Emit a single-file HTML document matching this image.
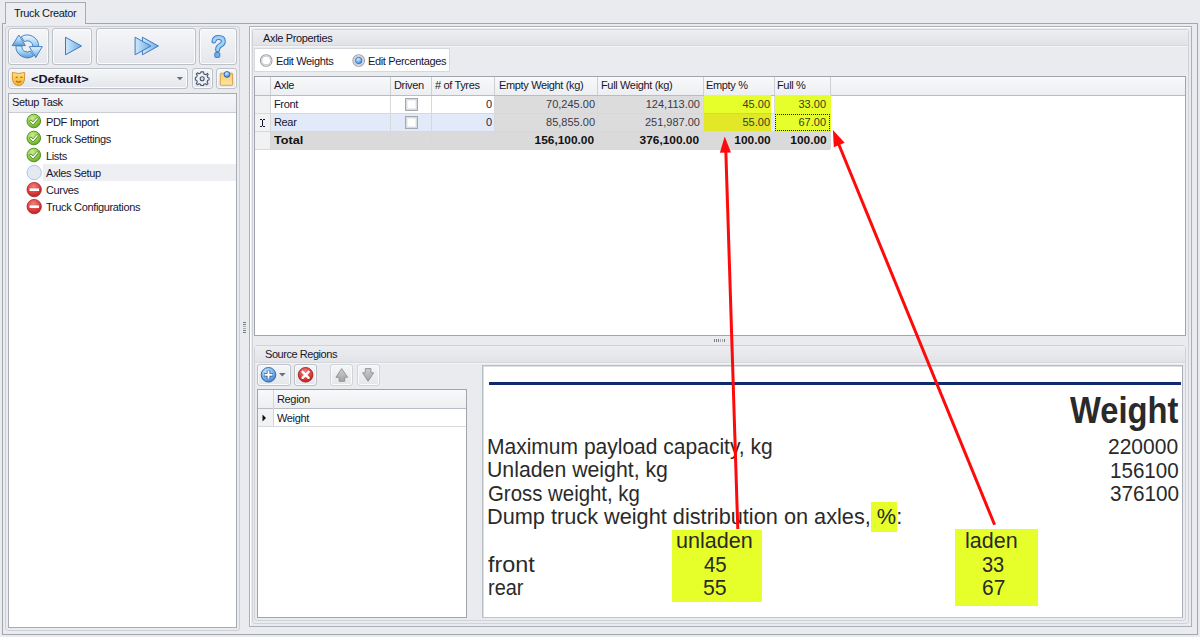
<!DOCTYPE html>
<html><head><meta charset="utf-8">
<style>
*{box-sizing:border-box;margin:0;padding:0}
html,body{width:1200px;height:637px;overflow:hidden;background:#E9EBEF;font-family:"Liberation Sans",sans-serif;font-size:11px;color:#16162E;position:relative}
.a{position:absolute}
.t{position:absolute;white-space:nowrap;letter-spacing:-0.35px;line-height:13px}
.btn{position:absolute;border:1px solid #BCC0C7;border-radius:3px;background:linear-gradient(#F5F6F8,#E4E6EB);box-shadow:inset 0 0 0 1px #FAFBFC}
.pdf{position:absolute;white-space:nowrap;font-size:22px;line-height:22px;color:#2A2A2A;transform-origin:0 0}
</style></head><body>

<!-- tab header -->
<div class="a" style="left:5px;top:2px;width:81px;height:22px;border:1px solid #A7ABB3;border-bottom:none;background:#EBEDF0"></div>
<div class="t" style="left:14px;top:7px">Truck Creator</div>
<!-- tab page frame -->
<div class="a" style="left:2px;top:23px;width:1196px;height:612px;border:1px solid #A2A6AE"></div>
<div class="a" style="left:6px;top:23px;width:79px;height:2px;background:#EBEDF0"></div>

<!-- LEFT PANEL -->
<div class="a" style="left:5px;top:26px;width:235px;height:605px;border:1px solid #CDD0D6;border-radius:3px"></div>
<div class="btn" style="left:8px;top:28px;width:41px;height:37px"></div>
<div class="btn" style="left:52px;top:28px;width:40px;height:37px"></div>
<div class="btn" style="left:96px;top:28px;width:100px;height:37px"></div>
<div class="btn" style="left:199px;top:28px;width:38px;height:37px"></div>
<!-- combo -->
<div class="btn" style="left:8px;top:68px;width:180px;height:21px"></div>
<div class="btn" style="left:192px;top:68px;width:21px;height:21px"></div>
<div class="btn" style="left:216px;top:68px;width:21px;height:21px"></div>
<div class="t" style="left:31px;top:73px;font-weight:bold;letter-spacing:0px;color:#141430;transform:scaleX(1.15);transform-origin:0 0">&lt;Default&gt;</div>

<!-- setup task panel -->
<div class="a" style="left:8px;top:93px;width:229px;height:535px;border:1px solid #A7ABB3;background:#fff"></div>
<div class="a" style="left:9px;top:94px;width:227px;height:19px;background:linear-gradient(#F5F6F8,#ECEDF0);border-bottom:1px solid #C9CCD2"></div>
<div class="t" style="left:12px;top:96px">Setup Task</div>
<div class="a" style="left:43px;top:164px;width:193px;height:17px;background:#EEEFF2"></div>
<div class="t" style="left:46px;top:116px">PDF Import</div>
<div class="t" style="left:46px;top:133px">Truck Settings</div>
<div class="t" style="left:46px;top:150px">Lists</div>
<div class="t" style="left:46px;top:167px">Axles Setup</div>
<div class="t" style="left:46px;top:184px">Curves</div>
<div class="t" style="left:46px;top:201px">Truck Configurations</div>

<!-- vertical splitter grip -->
<div class="a" style="left:243px;top:322px;width:3px;height:12px;background:repeating-linear-gradient(#7A7D86 0 1px,transparent 1px 2px)"></div><div class="a" style="left:243px;top:326px;width:3px;height:4px;background:repeating-linear-gradient(#A9ACB3 0 1px,#E9EBEF 1px 2px)"></div>

<!-- RIGHT PANEL -->
<div class="a" style="left:249px;top:26px;width:943px;height:601px;border:1px solid #ABAFB7;box-shadow:inset 1px 1px 0 #fff"></div>
<!-- group Axle Properties -->
<div class="a" style="left:252px;top:29px;width:937px;height:595px;border:1px solid #CFD2D8;border-radius:3px"></div>
<div class="a" style="left:253px;top:30px;width:935px;height:16px;background:linear-gradient(#EDEEF1,#E1E3E7);border-bottom:1px solid #D6D8DD"></div>
<div class="a" style="left:253px;top:46px;width:935px;height:1px;background:#F3F4F6"></div>
<div class="t" style="left:263px;top:32px">Axle Properties</div>
<!-- radio group -->
<div class="a" style="left:254px;top:48px;width:196px;height:24px;border:1px solid #D5D8DD;background:#fff"></div>
<div class="t" style="left:276px;top:55px">Edit Weights</div>
<div class="t" style="left:368px;top:55px">Edit Percentages</div>

<!-- GRID -->
<div id="grid" class="a" style="left:254px;top:76px;width:932px;height:260px;border:1px solid #A0A4AC;background:#fff"></div>
<!--GRIDSTART-->
<div class="a" style="left:255px;top:77px;width:930px;height:18px;background:linear-gradient(#F8F9FA,#EDEEF1)"></div>
<div class="a" style="left:255px;top:96px;width:15px;height:53px;background:#F1F2F4"></div>
<div class="a" style="left:271px;top:114px;width:223px;height:17px;background:#E2EAFA"></div>
<div class="a" style="left:495px;top:96px;width:208px;height:35px;background:#DCDCDC"></div>
<div class="a" style="left:271px;top:132px;width:559px;height:17px;background:#DADADA"></div>
<div class="a" style="left:255px;top:95px;width:930px;height:1px;background:#B9BCC3"></div>
<div class="a" style="left:255px;top:113px;width:575px;height:1px;background:#D6D8DC"></div>
<div class="a" style="left:255px;top:131px;width:575px;height:1px;background:#D6D8DC"></div>
<div class="a" style="left:255px;top:149px;width:575px;height:1px;background:#D6D8DC"></div>
<div class="a" style="left:270px;top:77px;width:1px;height:18px;background:#CDD0D5"></div>
<div class="a" style="left:270px;top:96px;width:1px;height:53px;background:#D6D8DC"></div>
<div class="a" style="left:390px;top:77px;width:1px;height:18px;background:#CDD0D5"></div>
<div class="a" style="left:390px;top:96px;width:1px;height:53px;background:#D6D8DC"></div>
<div class="a" style="left:431px;top:77px;width:1px;height:18px;background:#CDD0D5"></div>
<div class="a" style="left:431px;top:96px;width:1px;height:53px;background:#D6D8DC"></div>
<div class="a" style="left:494px;top:77px;width:1px;height:18px;background:#CDD0D5"></div>
<div class="a" style="left:494px;top:96px;width:1px;height:53px;background:#D6D8DC"></div>
<div class="a" style="left:597px;top:77px;width:1px;height:18px;background:#CDD0D5"></div>
<div class="a" style="left:597px;top:96px;width:1px;height:53px;background:#D6D8DC"></div>
<div class="a" style="left:703px;top:77px;width:1px;height:18px;background:#CDD0D5"></div>
<div class="a" style="left:703px;top:96px;width:1px;height:53px;background:#D6D8DC"></div>
<div class="a" style="left:774px;top:77px;width:1px;height:18px;background:#CDD0D5"></div>
<div class="a" style="left:774px;top:96px;width:1px;height:53px;background:#D6D8DC"></div>
<div class="a" style="left:830px;top:77px;width:1px;height:18px;background:#CDD0D5"></div>
<div class="a" style="left:830px;top:96px;width:1px;height:53px;background:#D6D8DC"></div>
<div class="a" style="left:704px;top:95px;width:67px;height:18px;background:#E6FF2A"></div>
<div class="a" style="left:704px;top:113px;width:67px;height:18px;background:#E2E828;border-top:1px solid #D7DA2E"></div>
<div class="a" style="left:775px;top:95px;width:56px;height:36px;background:#E6FF2A"></div>
<div class="a" style="left:771px;top:114px;width:4px;height:17px;background:#E2EAFA"></div>
<div class="a" style="left:775px;top:114px;width:55px;height:17px;border:1px dotted #222"></div>
<div class="a" style="left:405px;top:98px;width:13px;height:13px;border:1px solid #A4A8B0;background:#fff;box-shadow:inset 0 0 0 1px #D9DBE0,inset 0 0 0 2px #EEF0F2"></div>
<div class="a" style="left:405px;top:116px;width:13px;height:13px;border:1px solid #A4A8B0;background:#fff;box-shadow:inset 0 0 0 1px #D9DBE0,inset 0 0 0 2px #EEF0F2"></div>
<div class="t" style="left:274px;top:79px">Axle</div>
<div class="t" style="left:394px;top:79px">Driven</div>
<div class="t" style="left:435px;top:79px"># of Tyres</div>
<div class="t" style="left:499px;top:79px">Empty Weight (kg)</div>
<div class="t" style="left:601px;top:79px">Full Weight (kg)</div>
<div class="t" style="left:706px;top:79px">Empty %</div>
<div class="t" style="left:777px;top:79px">Full %</div>
<div class="t" style="left:274px;top:98px">Front</div>
<div class="t" style="left:274px;top:116px">Rear</div>
<div class="t" style="left:274px;top:134px;font-weight:bold;color:#111;letter-spacing:0px;transform:scaleX(1.15);transform-origin:0 0">Total</div>
<div class="t" style="right:708px;top:98px;color:#1E1E3C;letter-spacing:0px">0</div>
<div class="t" style="right:708px;top:116px;color:#1E1E3C;letter-spacing:0px">0</div>
<div class="t" style="right:605px;top:98px;color:#3A3A48;letter-spacing:0px">70,245.00</div>
<div class="t" style="right:605px;top:116px;color:#3A3A48;letter-spacing:0px">85,855.00</div>
<div class="t" style="right:606px;top:134px;color:#1E1E3C;font-weight:bold;letter-spacing:0px;color:#111;transform:scaleX(1.08);transform-origin:100% 0">156,100.00</div>
<div class="t" style="right:500px;top:98px;color:#3A3A48;letter-spacing:0px">124,113.00</div>
<div class="t" style="right:500px;top:116px;color:#3A3A48;letter-spacing:0px">251,987.00</div>
<div class="t" style="right:501px;top:134px;color:#1E1E3C;font-weight:bold;letter-spacing:0px;color:#111;transform:scaleX(1.08);transform-origin:100% 0">376,100.00</div>
<div class="t" style="right:430px;top:98px;color:#3A3A20;letter-spacing:0px">45.00</div>
<div class="t" style="right:430px;top:116px;color:#3A3A20;letter-spacing:0px">55.00</div>
<div class="t" style="right:429px;top:134px;color:#1E1E3C;font-weight:bold;letter-spacing:0px;color:#111;transform:scaleX(1.08);transform-origin:100% 0">100.00</div>
<div class="t" style="right:374px;top:98px;color:#3A3A20;letter-spacing:0px">33.00</div>
<div class="t" style="right:374px;top:116px;color:#3A3A20;letter-spacing:0px">67.00</div>
<div class="t" style="right:373px;top:134px;color:#1E1E3C;font-weight:bold;letter-spacing:0px;color:#111;transform:scaleX(1.08);transform-origin:100% 0">100.00</div>
<!--GRIDEND-->

<!-- splitter grip horizontal -->
<div class="a" style="left:714px;top:339px;width:12px;height:3px;background:repeating-linear-gradient(90deg,#7A7D86 0 1px,transparent 1px 2px)"></div><div class="a" style="left:720px;top:339px;width:4px;height:3px;background:repeating-linear-gradient(90deg,#A9ACB3 0 1px,#E9EBEF 1px 2px)"></div>

<!-- group Source Regions -->
<div class="a" style="left:254px;top:345px;width:932px;height:276px;border:1px solid #CFD2D8;border-radius:3px"></div>
<div class="a" style="left:255px;top:346px;width:930px;height:17px;background:linear-gradient(#EDEEF1,#E1E3E7);border-bottom:1px solid #D6D8DD"></div>
<div class="a" style="left:255px;top:363px;width:930px;height:1px;background:#F3F4F6"></div>
<div class="t" style="left:265px;top:348px;letter-spacing:-0.45px">Source Regions</div>

<div class="btn" style="left:257px;top:364px;width:34px;height:22px"></div>
<div class="btn" style="left:294px;top:364px;width:23px;height:22px"></div>
<div class="btn" style="left:330px;top:364px;width:23px;height:22px;border-color:#D0D3D8"></div>
<div class="btn" style="left:357px;top:364px;width:23px;height:22px;border-color:#D0D3D8"></div>

<!-- region grid -->
<div class="a" style="left:257px;top:389px;width:210px;height:229px;border:1px solid #A0A4AC;background:#fff"></div>

<!-- image panel -->
<div class="a" style="left:482px;top:365px;width:701px;height:253px;border:1px solid #B9BDC4;border-right-color:#A9ADB5;border-bottom-color:#C2C5CB;background:#fff;box-shadow:inset 1px 1px 0 #DDDFE3"></div>

<!--PDF-->
<!-- PDF preview content -->
<div class="a" style="left:489px;top:382px;width:692px;height:3px;background:#0E2B6E"></div>
<div class="a" style="left:672px;top:530px;width:90px;height:72px;background:#E6FF2A"></div>
<div class="a" style="left:955px;top:529px;width:83px;height:77px;background:#E6FF2A"></div>
<div class="a" style="left:871px;top:502px;width:26px;height:30px;background:#E6FF2A"></div>
<!-- region grid -->
<div class="a" style="left:258px;top:390px;width:208px;height:18px;background:linear-gradient(#F8F9FA,#EDEEF1)"></div>
<div class="a" style="left:258px;top:409px;width:15px;height:17px;background:#F1F2F4"></div>
<div class="a" style="left:258px;top:408px;width:208px;height:1px;background:#B9BCC3"></div>
<div class="a" style="left:258px;top:426px;width:208px;height:1px;background:#D6D8DC"></div>
<div class="a" style="left:273px;top:390px;width:1px;height:36px;background:#D2D5DA"></div>
<div class="t" style="left:277px;top:393px">Region</div>
<div class="t" style="left:277px;top:412px">Weight</div>


<div class="pdf" style="left:487.1px;top:436px;font-size:22px;line-height:22px;transform:scaleX(0.955)">Maximum payload capacity, kg</div>
<div class="pdf" style="left:487.1px;top:459px;font-size:22px;line-height:22px;transform:scaleX(0.967)">Unladen weight, kg</div>
<div class="pdf" style="left:488.1px;top:483px;font-size:22px;line-height:22px;transform:scaleX(0.927)">Gross weight, kg</div>
<div class="pdf" style="left:487.0px;top:506px;font-size:22px;line-height:22px;transform:scaleX(0.987)">Dump truck weight distribution on axles, %:</div>
<div class="pdf" style="left:1108.4px;top:436px;font-size:22px;line-height:22px;transform:scaleX(0.955)">220000</div>
<div class="pdf" style="left:1109.8px;top:460px;font-size:22px;line-height:22px;transform:scaleX(0.936)">156100</div>
<div class="pdf" style="left:1109.5px;top:483px;font-size:22px;line-height:22px;transform:scaleX(0.941)">376100</div>
<div class="pdf" style="left:676.3px;top:530px;font-size:22px;line-height:22px;transform:scaleX(0.979)">unladen</div>
<div class="pdf" style="left:965.4px;top:530px;font-size:22px;line-height:22px;transform:scaleX(0.978)">laden</div>
<div class="pdf" style="left:704.0px;top:554px;font-size:22px;line-height:22px;transform:scaleX(0.926)">45</div>
<div class="pdf" style="left:703.0px;top:577px;font-size:22px;line-height:22px;transform:scaleX(0.968)">55</div>
<div class="pdf" style="left:982.1px;top:554px;font-size:22px;line-height:22px;transform:scaleX(0.909)">33</div>
<div class="pdf" style="left:982.0px;top:577px;font-size:22px;line-height:22px;transform:scaleX(0.952)">67</div>
<div class="pdf" style="left:488.0px;top:554px;font-size:22px;line-height:22px;transform:scaleX(1.063)">front</div>
<div class="pdf" style="left:488.0px;top:577px;font-size:22px;line-height:22px;transform:scaleX(0.905)">rear</div>
<div class="pdf" style="left:1070.0px;top:392px;font-size:37px;line-height:37px;transform:scaleX(0.884);font-weight:bold">Weight</div>
<!--PDFEND-->
<!--SVG1-->
<svg class="a" style="left:0;top:0" width="1200" height="637" viewBox="0 0 1200 637">
<defs>
<linearGradient id="gB" x1="0" y1="0" x2="0" y2="1"><stop offset="0" stop-color="#E3F6FE"/><stop offset="0.55" stop-color="#9CCDF0"/><stop offset="1" stop-color="#5A9BDA"/></linearGradient>
<linearGradient id="gBt" x1="0" y1="0" x2="0" y2="1"><stop offset="0" stop-color="#EAF8FF"/><stop offset="1" stop-color="#8EC6EE"/></linearGradient>
<linearGradient id="gBH" x1="0" y1="0" x2="1" y2="0"><stop offset="0" stop-color="#CFEAFB"/><stop offset="1" stop-color="#6FACE3"/></linearGradient>
<radialGradient id="gG" cx="0.4" cy="0.3" r="0.8"><stop offset="0" stop-color="#C9EE86"/><stop offset="0.6" stop-color="#8CCB3E"/><stop offset="1" stop-color="#4F9A1E"/></radialGradient>
<radialGradient id="gR" cx="0.45" cy="0.3" r="0.8"><stop offset="0" stop-color="#F08080"/><stop offset="0.6" stop-color="#D83A3A"/><stop offset="1" stop-color="#A81818"/></radialGradient>
<radialGradient id="gBl" cx="0.4" cy="0.3" r="0.8"><stop offset="0" stop-color="#D2ECFC"/><stop offset="0.6" stop-color="#6AAEEA"/><stop offset="1" stop-color="#2F6FC2"/></radialGradient>
<linearGradient id="gY" x1="0" y1="0" x2="0" y2="1"><stop offset="0" stop-color="#FFE57A"/><stop offset="1" stop-color="#F3AE2E"/></linearGradient>
<linearGradient id="gN" x1="0" y1="0" x2="0" y2="1"><stop offset="0" stop-color="#F7C968"/><stop offset="1" stop-color="#FFE7A6"/></linearGradient>
<linearGradient id="gGr" x1="0" y1="0" x2="0" y2="1"><stop offset="0" stop-color="#CFCFCF"/><stop offset="1" stop-color="#A3A3A3"/></linearGradient>
</defs>
<!-- refresh -->
<g transform="translate(8,28)" stroke="#3B78BE" stroke-width="0.9" stroke-linejoin="round">
<path d="M7.92 17.80 A11.4 11.4 0 0 0 25.51 27.96 L22.35 23.10 A5.6 5.6 0 0 1 13.71 18.11 Z" fill="url(#gB)"/>
<path d="M4.20 17.6 L10.80 7 L17.40 17.6 Z" fill="url(#gB)"/>
<path d="M13.26 8.73 A11.4 11.4 0 0 1 30.70 18.40 L24.90 18.40 A5.6 5.6 0 0 0 16.33 13.65 Z" fill="url(#gBt)"/>
<path d="M21.30 18.6 L34.30 18.6 L27.80 29.6 Z" fill="url(#gB)"/>
</g>
<!-- play -->
<path d="M65.5 37.2 L65.5 54.8 L81.5 46 Z" fill="url(#gBH)" stroke="#3F78C0" stroke-width="1" stroke-linejoin="round"/>
<path d="M142.4 37.2 L142.4 54.8 L158.4 46 Z" fill="url(#gBH)" stroke="#3F78C0" stroke-width="1" stroke-linejoin="round"/>
<path d="M135.1 37.2 L135.1 54.8 L150.9 46 Z" fill="url(#gBH)" stroke="#3F78C0" stroke-width="1" stroke-linejoin="round"/>
<!-- question -->
<path d="M214 41 Q214.5 37.5 218.5 37.5 Q223.3 37.5 223.3 41.2 Q223.3 43.8 220.5 45.2 Q217.6 46.6 217.6 49.8" fill="none" stroke="#3F7CC2" stroke-width="5" stroke-linecap="round"/>
<path d="M214 41 Q214.5 37.5 218.5 37.5 Q223.3 37.5 223.3 41.2 Q223.3 43.8 220.5 45.2 Q217.6 46.6 217.6 49.8" fill="none" stroke="#9FD3F5" stroke-width="3" stroke-linecap="round"/>
<rect x="214.8" y="52.6" width="5" height="4.8" rx="1" fill="#6EB0E8" stroke="#3F7CC2" stroke-width="1"/>
<!-- mask -->
<path d="M12.3 72.5 Q18.5 74.5 24.7 72.5 L24.5 79 Q24 85.3 18.5 85.5 Q13 85.3 12.5 79 Z" fill="url(#gY)" stroke="#D48A26" stroke-width="0.9"/>
<path d="M15.6 77.3 h2.2 M20.3 77.3 h2.2" stroke="#9A5A10" stroke-width="1.1"/>
<path d="M16 81 Q18.5 83.3 21.2 81" stroke="#B06A14" stroke-width="1.2" fill="none"/>
<!-- combo arrow -->
<path d="M176.8 77 L183 77 L179.9 80.2 Z" fill="#6A6E76"/>
<!-- gear -->
<g transform="translate(202.2,78.7)">
<path d="M-1.3 -6.8 L1.3 -6.8 L1.7 -4.8 L3.5 -4.0 L5.1 -5.3 L6.0 -4.4 L4.9 -2.6 L5.5 -1.2 L6.8 -1.0 L6.8 1.3 L5.5 1.6 L4.8 3.3 L5.8 4.8 L4.6 6.0 L3.1 5.0 L1.5 5.6 L1.2 6.8 L-1.3 6.8 L-1.6 5.6 L-3.2 5.0 L-4.7 6.0 L-5.9 4.8 L-4.9 3.3 L-5.6 1.6 L-6.8 1.3 L-6.8 -1.2 L-5.6 -1.6 L-4.9 -3.3 L-5.9 -4.8 L-4.7 -5.9 L-3.3 -4.9 L-1.6 -5.6 Z" fill="#EEF1F5" stroke="#4C5870" stroke-width="1.1" stroke-linejoin="round"/>
<circle r="2" fill="#DDE2EA" stroke="#4C5870" stroke-width="1.1"/>
</g>
<!-- note -->
<rect x="220.3" y="73.2" width="12.3" height="12" rx="1" fill="url(#gN)" stroke="#D39A42" stroke-width="0.9"/>
<circle cx="227" cy="74.4" r="2.9" fill="url(#gBl)" stroke="#1E56A8" stroke-width="0.8"/>
<!-- setup task icons -->
<g stroke="#4A8A1E" stroke-width="0.9" fill="url(#gG)">
<circle cx="33.8" cy="121" r="6.8"/><circle cx="33.8" cy="138" r="6.8"/><circle cx="33.8" cy="155" r="6.8"/>
</g>
<g fill="none" stroke-linecap="round" stroke-linejoin="round">
<path d="M30.7 121.2 L33 123.6 L37.2 118.8" stroke="#3E6B22" stroke-width="2.6"/><path d="M30.7 121.2 L33 123.6 L37.2 118.8" stroke="#fff" stroke-width="1.5"/>
<path d="M30.7 138.2 L33 140.6 L37.2 135.8" stroke="#3E6B22" stroke-width="2.6"/><path d="M30.7 138.2 L33 140.6 L37.2 135.8" stroke="#fff" stroke-width="1.5"/>
<path d="M30.7 155.2 L33 157.6 L37.2 152.8" stroke="#3E6B22" stroke-width="2.6"/><path d="M30.7 155.2 L33 157.6 L37.2 152.8" stroke="#fff" stroke-width="1.5"/>
</g>
<circle cx="34.2" cy="172.5" r="7.2" fill="#E4E9F0" stroke="#A9C7EC" stroke-width="1"/>
<g stroke="#B02222" stroke-width="0.8" fill="url(#gR)"><circle cx="34.2" cy="189.6" r="7.2"/><circle cx="34.2" cy="206.6" r="7.2"/></g>
<rect x="29.6" y="188.4" width="9.4" height="2.6" fill="#fff"/><rect x="29.6" y="205.4" width="9.4" height="2.6" fill="#fff"/>
<!-- radios -->
<circle cx="266.2" cy="60.5" r="5.8" fill="#fff" stroke="#9A9EA6" stroke-width="1.1"/>
<circle cx="266.2" cy="60.5" r="4.5" fill="none" stroke="#CDD0D6" stroke-width="1.3"/>
<circle cx="358.7" cy="60.5" r="5.8" fill="#fff" stroke="#9A9EA6" stroke-width="1.1"/>
<circle cx="358.7" cy="60.5" r="4.5" fill="none" stroke="#CDD0D6" stroke-width="1.3"/>
<circle cx="358.7" cy="60.5" r="3.3" fill="url(#gBl)" stroke="#3566B8" stroke-width="0.8"/>
<!-- I-beam -->
<g fill="#141428" shape-rendering="crispEdges"><rect x="260" y="119" width="2" height="1"/><rect x="263" y="119" width="2" height="1"/><rect x="262" y="120" width="1" height="6"/><rect x="260" y="126" width="2" height="1"/><rect x="263" y="126" width="2" height="1"/></g>
<!-- source region toolbar -->
<circle cx="268.5" cy="374.8" r="7.3" fill="url(#gBl)" stroke="#2A5EA6" stroke-width="0.9"/>
<path d="M268.5 370.5 v8.6 M264.2 374.8 h8.6" stroke="#2A4E8A" stroke-width="3.6"/>
<path d="M268.5 370.8 v8 M264.5 374.8 h8" stroke="#fff" stroke-width="2"/>
<path d="M279 373 L285.6 373 L282.3 376.5 Z" fill="#6A6E76"/>
<circle cx="305.6" cy="374.8" r="7.3" fill="url(#gR)" stroke="#A81C1C" stroke-width="0.9"/>
<path d="M302.6 371.8 L308.6 377.8 M308.6 371.8 L302.6 377.8" stroke="#fff" stroke-width="2.4" stroke-linecap="round"/>
<path d="M341.7 368.6 L347.6 377.3 L344.7 377.3 L344.7 381.3 L339.1 381.3 L339.1 377.3 L335.9 377.3 Z" fill="url(#gGr)" stroke="#8E8E8E" stroke-width="0.9" stroke-linejoin="round"/>
<path d="M365.3 368.6 L370.9 368.6 L370.9 372.8 L373.7 372.8 L368.1 381.2 L362.6 372.8 L365.3 372.8 Z" fill="url(#gGr)" stroke="#8E8E8E" stroke-width="0.9" stroke-linejoin="round"/>
<!-- region grid row indicator -->
<path d="M262.5 414.5 L266 418 L262.5 421.5 Z" fill="#111"/>
</svg>

<!--SVG1END-->
<!--ARROWS-->
<svg class="a" style="left:0;top:0" width="1200" height="637" viewBox="0 0 1200 637">
<line x1="725.8" y1="150" x2="737.8" y2="529" stroke="#FF0A0A" stroke-width="3"/>
<path d="M724.7 136.5 L731 152.6 L719.9 152.8 Z" fill="#FF0A0A"/>
<line x1="837" y1="140" x2="994.6" y2="524.8" stroke="#FF0A0A" stroke-width="3"/>
<path d="M832.9 130 L844.7 142.8 L833.8 147.2 Z" fill="#FF0A0A"/>
</svg>

<!--ARROWSEND-->
</body></html>
